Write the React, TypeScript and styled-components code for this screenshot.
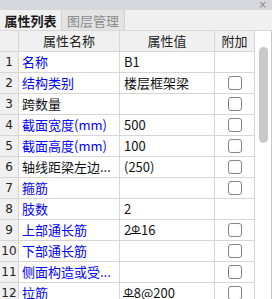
import React from 'react';
import styled, { createGlobalStyle } from 'styled-components';

interface Row {
    name: string;
    value: React.ReactNode;
    blue: boolean;
    check: boolean;
}

const GlobalStyle = createGlobalStyle`
    html, body {
        margin: 0;
        padding: 0;
        background: #ffffff;
    }
    body {
        font-family: "Noto Sans CJK SC", "Noto Sans", sans-serif;
    }
`;

// HRB400 steel grade mark: a phi with a bar across the foot
const Steel: React.FC = () => <SteelMark>Φ</SteelMark>;

const rows: Array<Row> = [
    { name: '名称', value: 'B1', blue: true, check: false },
    { name: '结构类别', value: '楼层框架梁', blue: true, check: true },
    { name: '跨数量', value: '', blue: false, check: true },
    { name: '截面宽度(mm)', value: '500', blue: true, check: true },
    { name: '截面高度(mm)', value: '100', blue: true, check: true },
    { name: '轴线距梁左边...', value: '(250)', blue: false, check: true },
    { name: '箍筋', value: '', blue: true, check: true },
    { name: '肢数', value: '2', blue: true, check: false },
    {
        name: '上部通长筋',
        value: (
            <>
                2<Steel />16
            </>
        ),
        blue: true,
        check: true
    },
    { name: '下部通长筋', value: '', blue: true, check: true },
    { name: '侧面构造或受...', value: '', blue: true, check: true },
    {
        name: '拉筋',
        value: (
            <>
                <Steel />8@200
            </>
        ),
        blue: true,
        check: true
    }
];

const App: React.FC = () => {
    return (
        <Panel>
            <GlobalStyle />
            <TitleStrip>
                <CloseMark>×</CloseMark>
            </TitleStrip>
            <TabBar>
                <Tab active>属性列表</Tab>
                <Tab>图层管理</Tab>
            </TabBar>
            <Body>
                <Grid>
                    <HeadCell />
                    <HeadCell>属性名称</HeadCell>
                    <HeadCell>属性值</HeadCell>
                    <HeadCell>附加</HeadCell>
                    {rows.map((row, i) => (
                        <React.Fragment key={i}>
                            <IndexCell>{i + 1}</IndexCell>
                            <NameCell blue={row.blue}>{row.name}</NameCell>
                            <ValueCell>{row.value}</ValueCell>
                            <CheckCell>{row.check && <CheckBox />}</CheckCell>
                        </React.Fragment>
                    ))}
                </Grid>
                <ScrollTrack>
                    <ScrollThumb />
                </ScrollTrack>
            </Body>
        </Panel>
    );
};

const Panel = styled.div`
    width: 272px;
    height: 299px;
    overflow: hidden;
    display: flex;
    flex-direction: column;
    background: #ffffff;
`;

const TitleStrip = styled.div`
    height: 10px;
    flex-shrink: 0;
    background: #d6d7dc;
    display: flex;
    justify-content: flex-end;
    align-items: center;
    padding-right: 5px;
`;

const CloseMark = styled.span`
    font-family: "DejaVu Sans", sans-serif;
    font-size: 10px;
    line-height: 10px;
    color: #8a8a8a;
`;

const TabBar = styled.div`
    height: 21px;
    flex-shrink: 0;
    box-sizing: border-box;
    background: #f0f0f0;
    display: flex;
    border-bottom: 1px solid #d8d8d8;
`;

const Tab = styled.div<{ active?: boolean }>`
    width: ${p => (p.active ? '62px' : '63px')};
    display: flex;
    align-items: center;
    justify-content: center;
    font-size: 13px;
    font-weight: ${p => (p.active ? 700 : 400)};
    color: ${p => (p.active ? '#1a1a1a' : '#8c8c8c')};
    background: ${p => (p.active ? '#f0f0f0' : '#e3e3e3')};
    border-right: 1px solid #d0d0d0;
    box-sizing: border-box;
`;

const Body = styled.div`
    flex: 1;
    display: flex;
    min-height: 0;
`;

const Grid = styled.div`
    width: 255px;
    display: grid;
    grid-template-columns: 19px 101px 95px 40px;
    grid-auto-rows: 21px;
    align-content: start;
`;

const Cell = styled.div`
    box-sizing: border-box;
    border-right: 1px solid #d6d6d6;
    border-bottom: 1px solid #d6d6d6;
    display: flex;
    align-items: center;
    font-size: 13px;
    line-height: 20px;
    white-space: nowrap;
    overflow: hidden;
    color: #111111;
`;

const HeadCell = styled(Cell)`
    background: #f0f0f0;
    justify-content: center;
    color: #222222;
`;

const IndexCell = styled(Cell)`
    background: #f0f0f0;
    justify-content: center;
    font-family: "DejaVu Sans", sans-serif;
    font-size: 12px;
    color: #222222;
`;

const NameCell = styled(Cell)<{ blue: boolean }>`
    padding-left: 3px;
    color: ${p => (p.blue ? '#0000ff' : '#111111')};
`;

const ValueCell = styled(Cell)`
    padding-left: 4px;
`;

const CheckCell = styled(Cell)`
    justify-content: center;
`;

const CheckBox = styled.span`
    width: 14px;
    height: 14px;
    box-sizing: border-box;
    border: 1px solid #858585;
    border-radius: 3px;
    background: #ffffff;
`;

const SteelMark = styled.span`
    position: relative;
    display: inline-block;
    font-size: 11px;
    line-height: 1;
    margin-right: 1px;
    transform: translateY(-2px);
    &::after {
        content: '';
        position: absolute;
        left: -1px;
        right: -1px;
        bottom: 0;
        height: 1px;
        background: #111111;
    }
`;

const ScrollTrack = styled.div`
    width: 17px;
    box-sizing: border-box;
    border-right: 1px solid #c8c8c8;
    display: flex;
    justify-content: center;
    padding-top: 16px;
`;

const ScrollThumb = styled.div`
    width: 9px;
    height: 96px;
    border-radius: 5px;
    background: #c9c9c9;
`;

export default App;
